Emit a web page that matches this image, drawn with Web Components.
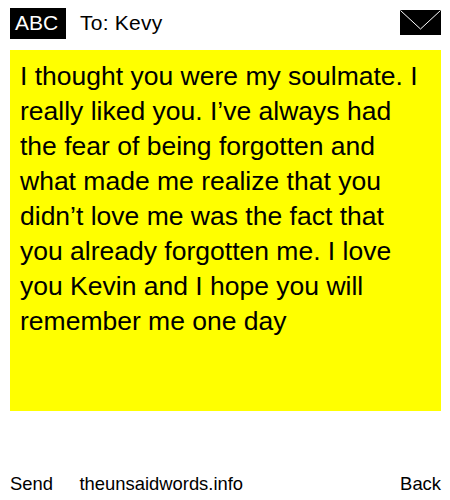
<!DOCTYPE html>
<html>
<head>
<meta charset="utf-8">
<style>
	html, body { margin: 0; padding: 0; background: #fff; }
	body { font-family: "Liberation Sans", Arial, sans-serif; color: #000; }
</style>
</head>
<body>
<note-screen>
	<note-header to="Kevy"></note-header>
	<note-message>I thought you were my soulmate. I really liked you. I’ve always had the fear of being forgotten and what made me realize that you didn’t love me was the fact that you already forgotten me. I love you Kevin and I hope you will remember me one day</note-message>
	<note-footer site="theunsaidwords.info"></note-footer>
</note-screen>
<script>
class NoteScreen extends HTMLElement {
	constructor() {
		super()
		this.attachShadow({ mode: 'open' }).innerHTML = `
			<style>
				:host {
					display: flex;
					flex-direction: column;
					box-sizing: border-box;
					width: 450px;
					height: 500px;
					padding: 8px 9px 0 10px;
				}
			</style>
			<slot></slot>
		`
	}
}

class NoteHeader extends HTMLElement {
	constructor() {
		super()
		this.attachShadow({ mode: 'open' }).innerHTML = `
			<style>
				:host {
					display: flex;
					align-items: flex-start;
					height: 42px;
					flex: none;
				}
				.mode {
					box-sizing: border-box;
					width: 56px;
					height: 31px;
					padding-left: 5px;
					line-height: 30px;
					background: #000;
					color: #fff;
					font-size: 21px;
				}
				.to {
					margin-left: 14px;
					height: 31px;
					line-height: 30px;
					font-size: 21px;
					letter-spacing: 0.25px;
					flex: 1;
				}
				svg {
					display: block;
					margin-top: 2px;
				}
			</style>
			<div class="mode">ABC</div>
			<div class="to">To: ${this.getAttribute('to')}</div>
			<svg width="41" height="25" viewBox="0 0 41 25">
				<rect width="41" height="25" fill="#000"/>
				<path d="M0.5 0.5 L20.5 19 L40.5 0.5" fill="none" stroke="#fff" stroke-width="1"/>
			</svg>
		`
	}
}

class NoteMessage extends HTMLElement {
	constructor() {
		super()
		this.attachShadow({ mode: 'open' }).innerHTML = `
			<style>
				:host {
					display: block;
					flex: none;
					box-sizing: border-box;
					height: 361px;
					padding: 9px 10px;
					background: #ff0;
					font-size: 26.5px;
					line-height: 35px;
				}
			</style>
			<slot></slot>
		`
	}
}

class NoteFooter extends HTMLElement {
	constructor() {
		super()
		this.attachShadow({ mode: 'open' }).innerHTML = `
			<style>
				:host {
					display: flex;
					flex: none;
					margin-top: 62px;
					font-size: 18.4px;
					line-height: 22px;
				}
				.send {
					width: 69.5px;
				}
				.site {
					flex: 1;
				}
			</style>
			<div class="send">Send</div>
			<div class="site">${this.getAttribute('site')}</div>
			<div>Back</div>
		`
	}
}

customElements.define('note-screen', NoteScreen)
customElements.define('note-header', NoteHeader)
customElements.define('note-message', NoteMessage)
customElements.define('note-footer', NoteFooter)
</script>
</body>
</html>
